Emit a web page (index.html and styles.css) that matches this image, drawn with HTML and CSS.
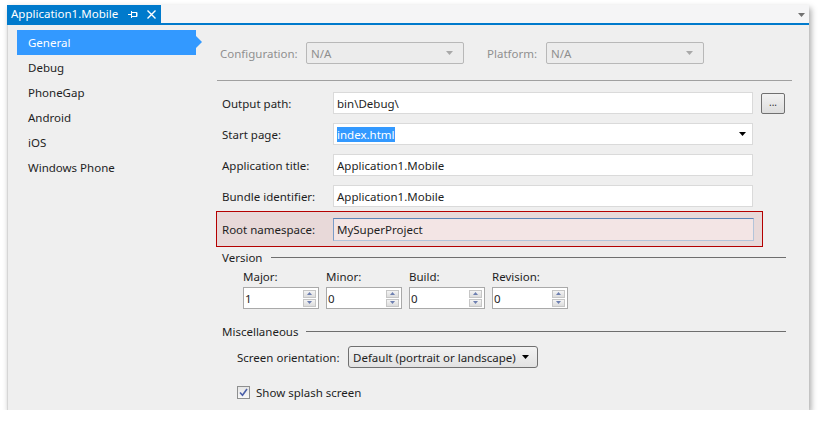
FILE: index.html
```html
<!DOCTYPE html>
<html>
<head>
<meta charset="utf-8">
<link rel="stylesheet" href="styles.css">
</head>
<body>
<div class="window">
  <div class="tabbar">
    <div class="tab">
      <span class="tab-title">Application1.Mobile</span>
      <svg class="tab-pin" width="10" height="9" viewBox="0 0 10 9"><path d="M0 4.5h3.5M3.5 1v7M3.5 2.5h5.5v4h-5.5M8.5 2.5v4" stroke="#fff" stroke-width="1" fill="none"/></svg>
      <svg class="tab-close" width="9" height="9" viewBox="0 0 9 9"><path d="M0.5 0.5l8 8M8.5 0.5l-8 8" stroke="#fff" stroke-width="1.4" fill="none"/></svg>
    </div>
    <div class="tab-fill"></div>
    <svg class="tab-menu" width="7" height="4" viewBox="0 0 7 4"><path d="M0 0h7l-3.5 4z" fill="#717171"/></svg>
  </div>
  <div class="body">
    <nav class="sidebar">
      <div class="nav-item selected">General</div>
      <div class="nav-item">Debug</div>
      <div class="nav-item">PhoneGap</div>
      <div class="nav-item">Android</div>
      <div class="nav-item">iOS</div>
      <div class="nav-item">Windows Phone</div>
    </nav>
    <main class="main">
      <div class="config-row">
        <span class="dim-label">Configuration:</span>
        <div class="combo disabled"><span>N/A</span><svg width="7" height="4" viewBox="0 0 7 4"><path d="M0 0h7l-3.5 4z" fill="#a8a8a8"/></svg></div>
        <span class="dim-label platform">Platform:</span>
        <div class="combo disabled"><span>N/A</span><svg width="7" height="4" viewBox="0 0 7 4"><path d="M0 0h7l-3.5 4z" fill="#a8a8a8"/></svg></div>
      </div>
      <div class="sep"></div>
      <div class="form">
        <div class="row">
          <label>Output path:</label>
          <div class="field">bin\Debug\</div>
          <button class="browse">...</button>
        </div>
        <div class="row">
          <label>Start page:</label>
          <div class="field drop"><span class="sel">index.html</span><svg width="7" height="4" viewBox="0 0 7 4"><path d="M0 0h7l-3.5 4z" fill="#000"/></svg></div>
        </div>
        <div class="row">
          <label>Application title:</label>
          <div class="field">Application1.Mobile</div>
        </div>
        <div class="row">
          <label>Bundle identifier:</label>
          <div class="field">Application1.Mobile</div>
        </div>
        <div class="row highlight">
          <label>Root namespace:</label>
          <div class="field focus">MySuperProject</div>
        </div>
      </div>
      <div class="group-head version-head"><span>Version</span><div class="line"></div></div>
      <div class="version-grid">
        <div class="ver">
          <label>Major:</label>
          <div class="spin"><span>1</span><div class="spin-btns"><div class="sb"><svg width="5" height="3" viewBox="0 0 5 3"><path d="M0 3h5l-2.5-3z" fill="#6d7fb0"/></svg></div><div class="sb"><svg width="5" height="3" viewBox="0 0 5 3"><path d="M0 0h5l-2.5 3z" fill="#6d7fb0"/></svg></div></div></div>
        </div>
        <div class="ver">
          <label>Minor:</label>
          <div class="spin"><span>0</span><div class="spin-btns"><div class="sb"><svg width="5" height="3" viewBox="0 0 5 3"><path d="M0 3h5l-2.5-3z" fill="#6d7fb0"/></svg></div><div class="sb"><svg width="5" height="3" viewBox="0 0 5 3"><path d="M0 0h5l-2.5 3z" fill="#6d7fb0"/></svg></div></div></div>
        </div>
        <div class="ver">
          <label>Build:</label>
          <div class="spin"><span>0</span><div class="spin-btns"><div class="sb"><svg width="5" height="3" viewBox="0 0 5 3"><path d="M0 3h5l-2.5-3z" fill="#6d7fb0"/></svg></div><div class="sb"><svg width="5" height="3" viewBox="0 0 5 3"><path d="M0 0h5l-2.5 3z" fill="#6d7fb0"/></svg></div></div></div>
        </div>
        <div class="ver">
          <label>Revision:</label>
          <div class="spin"><span>0</span><div class="spin-btns"><div class="sb"><svg width="5" height="3" viewBox="0 0 5 3"><path d="M0 3h5l-2.5-3z" fill="#6d7fb0"/></svg></div><div class="sb"><svg width="5" height="3" viewBox="0 0 5 3"><path d="M0 0h5l-2.5 3z" fill="#6d7fb0"/></svg></div></div></div>
        </div>
      </div>
      <div class="group-head misc-head"><span>Miscellaneous</span><div class="line"></div></div>
      <div class="orient-row">
        <label>Screen orientation:</label>
        <div class="combo solid"><span>Default (portrait or landscape)</span><svg width="7" height="4" viewBox="0 0 7 4"><path d="M0 0h7l-3.5 4z" fill="#000"/></svg></div>
      </div>
      <div class="check-row">
        <span class="checkbox"><svg width="9" height="9" viewBox="0 0 9 9"><path d="M1 4.5l2.5 2.8L8 1" stroke="#4a5fa8" stroke-width="1.6" fill="none"/></svg></span>
        <span>Show splash screen</span>
      </div>
    </main>
  </div>
</div>
</body>
</html>
```
FILE: styles.css
```css
html, body {
  margin: 0;
  padding: 0;
  background: #ffffff;
}
body {
  font-family: "Noto Sans", "Open Sans", sans-serif;
  font-size: 11.5px;
  line-height: 15px;
  color: #1e1e1e;
}
.window {
  margin: 5px 0 0 7px;
  width: 802px;
  height: 405px;
  display: flex;
  flex-direction: column;
  box-shadow: 2px 3px 6px rgba(0, 0, 0, 0.35);
  background: #efefef;
}
.tabbar {
  height: 18px;
  display: flex;
  align-items: center;
  background: #f5f5f6;
  border-bottom: 2px solid #007acc;
  flex: none;
}
.tab {
  height: 18px;
  background: #007acc;
  color: #fff;
  display: flex;
  align-items: center;
  padding: 0 0 0 4px;
  width: 154px;
  box-sizing: border-box;
  white-space: nowrap;
}
.tab-title {
  line-height: 18px;
}
.tab-pin {
  flex: none;
  margin-left: 10px;
}
.tab-close {
  flex: none;
  margin-left: 9px;
}
.tab-fill {
  flex: 1;
}
.tab-menu {
  margin-right: 4px;
  margin-top: 1px;
}
.body {
  flex: 1;
  display: flex;
  background: #efefef;
  border-left: 1px solid #d6d6d6;
}
.sidebar {
  width: 199px;
  padding: 5px 0 0 9px;
  flex: none;
}
.nav-item {
  width: 179px;
  height: 25px;
  line-height: 25px;
  padding-left: 11px;
  box-sizing: border-box;
  color: #1e1e1e;
  position: relative;
}
.nav-item.selected {
  background: #3399ff;
  color: #fff;
}
.nav-item.selected::after {
  content: "";
  position: absolute;
  left: 179px;
  top: 6px;
  border-left: 6px solid #3399ff;
  border-top: 6px solid transparent;
  border-bottom: 6px solid transparent;
}
.main {
  flex: 1;
  display: flex;
  flex-direction: column;
}
.config-row {
  display: flex;
  align-items: center;
  margin-top: 17px;
  padding-left: 4px;
  height: 22px;
}
.dim-label {
  color: #8f8f8f;
  width: 86px;
}
.dim-label.platform {
  width: 59px;
  margin-left: 23px;
}
.combo {
  height: 22px;
  box-sizing: border-box;
  display: flex;
  align-items: center;
  justify-content: space-between;
  padding: 0 10px 0 4px;
  border-radius: 2px;
  white-space: nowrap;
}
.combo.disabled {
  width: 158px;
  border: 1px solid #b8b8b8;
  background: #ececec;
  color: #8f8f8f;
}
.sep {
  margin: 16px 17px 0 1px;
  height: 1px;
  background: #a0a0a0;
}
.form {
  margin-top: 11px;
  display: flex;
  flex-direction: column;
  gap: 9px;
}
.row {
  display: grid;
  grid-template-columns: 111px 420px auto;
  align-items: center;
  padding-left: 6px;
}
.row label {
  color: #1e1e1e;
}
.field {
  height: 22px;
  box-sizing: border-box;
  background: #fff;
  border: 1px solid #dadada;
  padding-left: 3px;
  display: flex;
  align-items: center;
  white-space: nowrap;
}
.field.drop {
  justify-content: space-between;
  padding-right: 6px;
}
.sel {
  background: #3399ff;
  color: #fff;
  line-height: 15px;
}
.browse {
  margin-left: 8px;
  width: 24px;
  height: 21px;
  border: 1px solid #707070;
  border-radius: 2px;
  background: linear-gradient(#f2f2f2, #dddddd);
  font-family: inherit;
  font-size: 10px;
  padding: 0 0 3px 0;
  color: #333;
  line-height: 1;
}
.row.highlight {
  margin-top: -5px;
  width: 547px;
  box-sizing: border-box;
  border: 1px solid #b40000;
  background: #e8d9d9;
  padding: 6px 0 5px 5px;
  grid-template-columns: 111px 421px;
}
.field.focus {
  height: 23px;
  background: #f3e5e5;
  border-color: #5a84b8 #b3c4da #b3c4da #7a9cc8;
}
.group-head {
  display: flex;
  align-items: center;
  padding-left: 6px;
  margin-right: 23px;
  height: 14px;
}
.group-head .line {
  flex: 1;
  height: 1px;
  background: #6e6e6e;
  margin-left: 9px;
}
.version-head {
  margin-top: 3px;
}
.misc-head {
  margin-top: 15px;
}
.misc-head .line {
  margin-left: 8px;
}
.version-grid {
  display: flex;
  gap: 7px;
  padding-left: 27px;
  margin-top: 6px;
}
.ver {
  display: flex;
  flex-direction: column;
  width: 76px;
}
.ver label {
  height: 17px;
  line-height: 14px;
}
.spin {
  height: 22px;
  box-sizing: border-box;
  border: 1px solid #a9a9a9;
  background: #fff;
  display: flex;
  align-items: center;
  justify-content: space-between;
  padding: 0 2px 0 1px;
}
.spin-btns {
  display: flex;
  flex-direction: column;
  gap: 1px;
}
.sb {
  width: 13px;
  height: 8px;
  box-sizing: border-box;
  border: 1px solid #c6c6c6;
  background: linear-gradient(#f4f4f4, #dcdcdc);
  display: flex;
  align-items: center;
  justify-content: center;
}
.orient-row {
  display: flex;
  align-items: center;
  padding-left: 21px;
  margin-top: 8px;
}
.orient-row label {
  width: 111px;
}
.combo.solid {
  width: 190px;
  height: 22px;
  border: 1px solid #707070;
  border-radius: 3px;
  background: linear-gradient(#f3f3f3, #e2e2e2);
  color: #1e1e1e;
  padding: 0 8px 0 4px;
}
.check-row {
  display: flex;
  align-items: center;
  gap: 6px;
  padding-left: 21px;
  margin-top: 17px;
}
.checkbox {
  width: 13px;
  height: 13px;
  box-sizing: border-box;
  border: 1px solid #8e8f8f;
  background: linear-gradient(#e6e6e6, #f8f8f8);
  display: flex;
  align-items: center;
  justify-content: center;
}
```
